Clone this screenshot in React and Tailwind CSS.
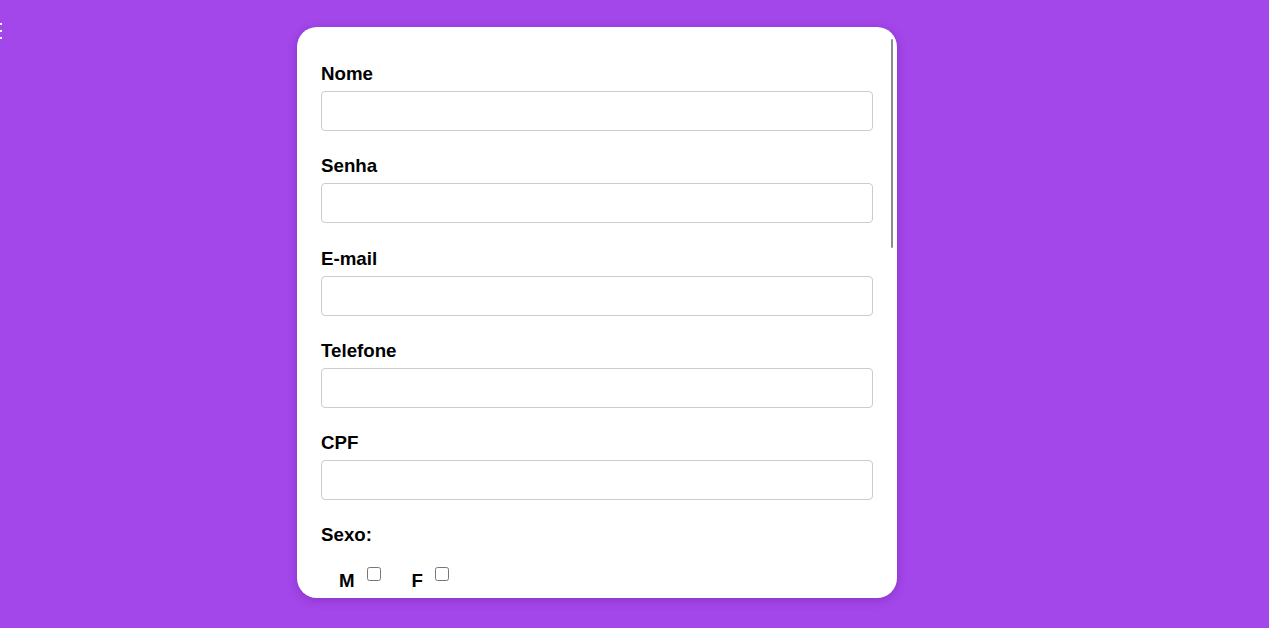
const fields = ["Nome", "Senha", "E-mail", "Telefone", "CPF"];

const App = () => {
  return (
    <div
      className="relative min-h-[628px] w-full bg-[#a346ea] pl-[297px] pt-[27px]"
      style={{ fontFamily: '"Liberation Sans", Arial, sans-serif' }}
    >
      {/* menu icon, mostly off-screen */}
      <div className="absolute left-[-1px] top-[23px] flex flex-col gap-[5px]">
        <span className="block h-[2px] w-[3px] bg-white" />
        <span className="block h-[2px] w-[3px] bg-white" />
        <span className="block h-[2px] w-[3px] bg-white" />
      </div>

      <div className="relative h-[571px] w-[600px] overflow-hidden rounded-[20px] bg-white px-[24px] pt-[36px] shadow-[0_2px_10px_rgba(60,0,90,0.25)]">
        <form>
          {fields.map((field) => (
            <div key={field} className="mb-[24.25px]">
              <label className="mb-[7px] block text-[18.72px] font-bold leading-[21px] text-black">
                {field}
              </label>
              <input
                type="text"
                className="block h-[40px] w-[552px] rounded-[4px] border border-[#cccccc] bg-white px-3 outline-none"
              />
            </div>
          ))}

          <div>
            <p className="text-[18.72px] font-bold leading-[21px] text-black">Sexo:</p>
            <div className="mt-[22px] flex items-start pl-[18px]">
              <label className="mt-[3px] text-[18.72px] font-bold leading-[21px] text-black">M</label>
              <input type="checkbox" className="ml-[12px] h-[14px] w-[14px]" />
              <label className="ml-[31px] mt-[3px] text-[18.72px] font-bold leading-[21px] text-black">F</label>
              <input type="checkbox" className="ml-[12px] h-[14px] w-[14px]" />
            </div>
          </div>

          <div className="h-[200px]" />
        </form>

        {/* scrollbar thumb */}
        <div className="absolute right-[4px] top-[12px] h-[209px] w-[2px] rounded-full bg-[#8c8c8c]" />
      </div>
    </div>
  );
};

export default App;
